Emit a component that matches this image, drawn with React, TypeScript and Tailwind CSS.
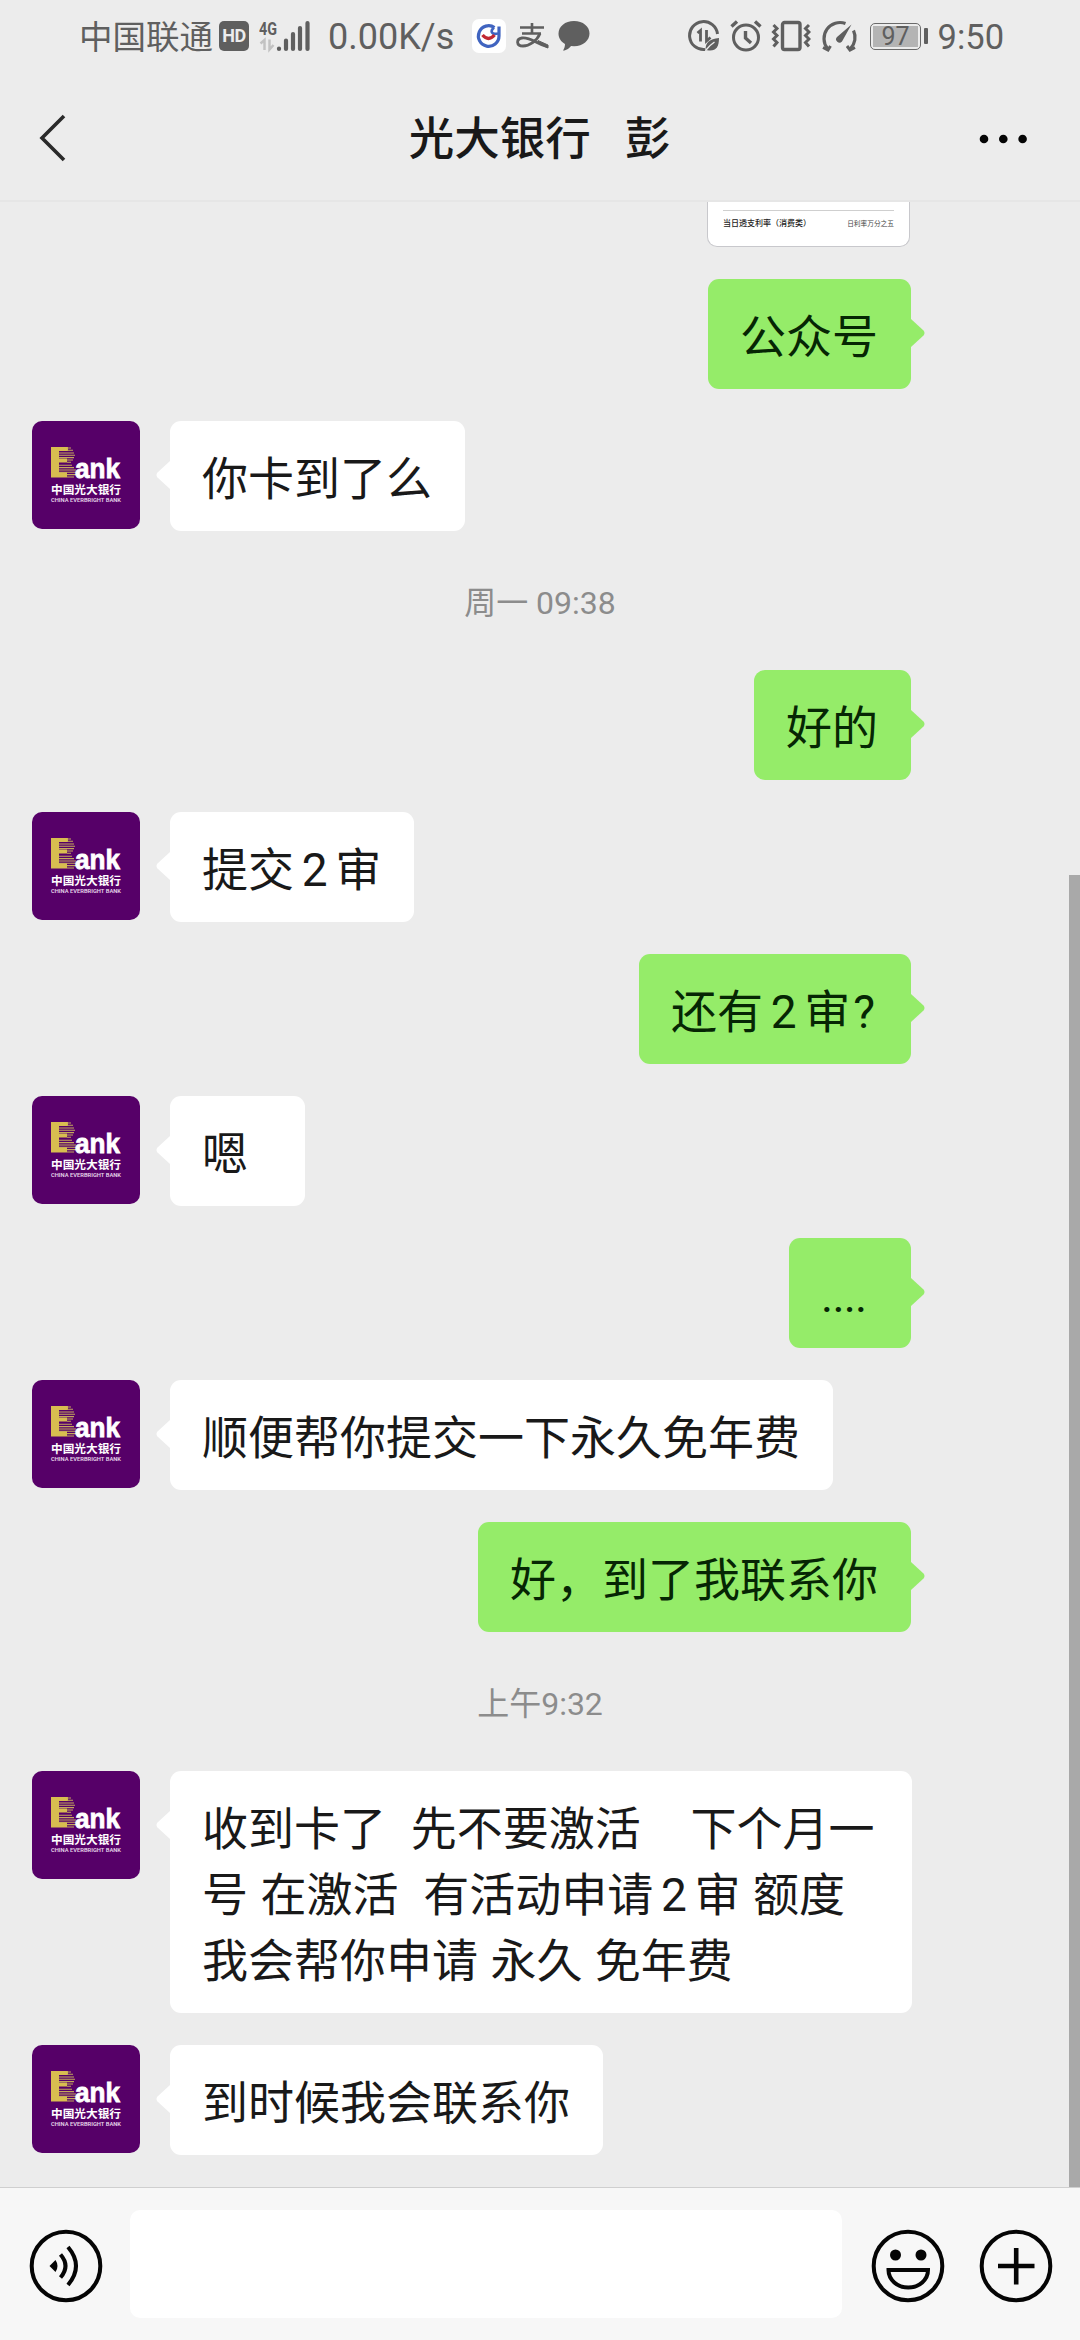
import clsx from 'clsx'

type Item =
  | { kind: 'time'; text: string }
  | { kind: 'msg'; mine: boolean; lines: string[] }

const items: Item[] = [
  { kind: 'msg', mine: true, lines: ['公众号'] },
  { kind: 'msg', mine: false, lines: ['你卡到了么'] },
  { kind: 'time', text: '周一 09:38' },
  { kind: 'msg', mine: true, lines: ['好的'] },
  { kind: 'msg', mine: false, lines: ['提交2审'] },
  { kind: 'msg', mine: true, lines: ['还有2审?'] },
  { kind: 'msg', mine: false, lines: ['嗯  '] },
  { kind: 'msg', mine: true, lines: ['.... '] },
  { kind: 'msg', mine: false, lines: ['顺便帮你提交一下永久免年费'] },
  { kind: 'msg', mine: true, lines: ['好，到了我联系你'] },
  { kind: 'time', text: '上午9:32' },
  {
    kind: 'msg',
    mine: false,
    lines: ['收到卡了  先不要激活    下个月一', '号 在激活  有活动申请2审 额度', '我会帮你申请 永久 免年费'],
  },
  { kind: 'msg', mine: false, lines: ['到时候我会联系你'] },
]

function StatusBar() {
  return (
    <div className="flex h-[72px] shrink-0 items-center text-[#5f5f5f]">
      <span className="ml-[79px] w-[134px] whitespace-nowrap pt-[3px] text-[33.5px] leading-none">中国联通</span>
      <span className="ml-[6px] flex h-[30px] w-[30px] items-center justify-center rounded-[5px] bg-[#5f5f5f] text-[18px] font-bold leading-none tracking-[-0.5px] text-[#ececec]">
        HD
      </span>
      {/* Signal */}
      <svg className="ml-[10px]" width="52" height="44" viewBox="0 -6 52 44">
        <text x="0" y="14.500" fontSize="18" fontWeight="700" fill="#5f5f5f" textLength="18" lengthAdjust="spacingAndGlyphs">4G</text>
        <g stroke="#c2c2c2" strokeWidth="2.5" fill="none">
          <path d="M1.500 23.500l4-3.500v10M10.500 19.500v10l4-4.500" />
        </g>
        <g stroke="#5f5f5f" strokeWidth="4.200" strokeLinecap="round">
          <path d="M20 28.500v.5M27 20.500v8.500M34 14v15M41 8v21M48.500 3v26" />
        </g>
      </svg>
      <span className="ml-[17px] w-[126px] whitespace-nowrap pt-[2px] text-[36px] leading-none">0.00K/s</span>
      {/* Notification icons */}
      <svg className="ml-[18px]" width="34" height="34" viewBox="0 0 34 34" fill="none">
        <rect width="34" height="34" rx="7" fill="#fff" />
        <path d="M22.500 8.500A10.300 10.300 0 1 0 27 17V7.500" stroke="#4064c0" strokeWidth="3.200" />
        <path d="M22 8.500C18 12 19 16 26 14.500" stroke="#4064c0" strokeWidth="2.600" />
        <path d="M10.500 16q6 7 12 0" stroke="#c22832" strokeWidth="3.400" />
      </svg>
      <svg className="ml-[10px]" width="33" height="30" viewBox="0 0 33 30" fill="none" stroke="#5f5f5f">
        <path d="M4 6.500h24M16 2v10M6 12.500h19" strokeWidth="2.600" />
        <path d="M24 12.500C21 20 13 25 7 25c-7 0-7-7-1-8 9-1 14 6 26 9" strokeWidth="2.800" />
        <path d="M22 19.500l10 4.500v3l-10-5z" fill="#5f5f5f" strokeWidth="1" />
      </svg>
      <svg className="ml-[8px]" width="34" height="32" viewBox="0 0 34 32" fill="#5f5f5f">
        <path d="M17 1C8 1 1.500 6.500 1.500 13.500c0 4.500 2.500 8.300 6.500 10.500 0 3-1 5-2 6.500 4 0 6.500-2.500 8-4.500l3 .2c9 0 15.500-5.700 15.500-12.700S26 1 17 1z" />
      </svg>

      {/* Data saver */}
      <svg className="ml-[97px]" width="32" height="32" viewBox="0 0 32 32" fill="none" stroke="#5f5f5f">
        <path d="M17 29.500A14 14 0 1 1 29.500 14" strokeWidth="3" />
        <path d="M9.500 13l3-2.500v11M18.500 10v11l4-3.500" strokeWidth="2.800" />
        <path d="M17.500 30c0-8 4-11 13.500-12 0 9-3 13-10 12.500z" fill="#5f5f5f" stroke="none" />
        <path d="M18 30q4-5 8.500-8" stroke="#ececec" strokeWidth="1.400" />
      </svg>
      {/* Alarm */}
      <svg className="ml-[10px]" width="32" height="32" viewBox="0 0 32 32" fill="none" stroke="#5f5f5f" strokeWidth="3">
        <circle cx="16" cy="17.500" r="12.500" />
        <path d="M15.500 11v7l5.500 5M1.500 6.500l5.500-5M30.500 6.500l-5.500-5" strokeWidth="3.400" />
      </svg>
      {/* Vibrate */}
      <svg className="ml-[9px]" width="40" height="32" viewBox="0 0 40 32" fill="none" stroke="#5f5f5f" strokeWidth="3.400">
        <rect x="11.500" y="2.500" width="17.500" height="27" rx="2" />
        <path d="M2.500 5l3.500 3.500-3.500 3.500 3.500 3.500-3.500 3.500 3.500 3.500-3.500 4M38 5l-3.500 3.500 3.500 3.500-3.500 3.500 3.500 3.500-3.500 3.500 3.500 4" strokeWidth="3" />
      </svg>
      {/* Performance gauge */}
      <svg className="ml-[9px]" width="38" height="34" viewBox="0 0 38 34" fill="none" stroke="#5f5f5f" strokeWidth="3.200">
        <path d="M25.500 4.500A16 16 0 0 0 7.500 29.500M33.500 11.500A16 16 0 0 1 30.500 29.500" />
        <path d="M3 28.500l5 2.500 2.500-4M35 28.500l-5 2.500-3-4" strokeWidth="3" />
        <path d="M31.500 5.500L22 22.500a3.300 3.300 0 1 1-5-4.500z" fill="#5f5f5f" stroke="none" />
      </svg>
      {/* Battery */}
      <div className="ml-[12px] flex items-center">
        <div className="flex h-[27px] w-[51px] rounded-[5px] border-[1.500px] border-[#6a6a6a] p-[2px]">
          <span className="flex flex-1 items-center justify-center bg-[#b4b4b4] text-[25px] leading-none">97</span>
        </div>
        <span className="ml-[3px] h-[16px] w-[3.500px] rounded-[1px] bg-[#5f5f5f]" />
      </div>
      <span className="ml-[10px] pt-[2px] text-[34.500px] leading-none">9:50</span>
    </div>
  )
}

function Header() {
  return (
    <div className="grid h-[130px] shrink-0 grid-cols-[1fr_auto_1fr] items-center border-b-2 border-[#e6e6e6] pl-[38px] pr-[53px]">
      <svg className="mt-[3px]" width="30" height="50" viewBox="0 0 30 50" fill="none" stroke="#2a2a2a" strokeWidth="3.600">
        <path d="M26 3L4 25l22 22" />
      </svg>
      <h1 className="ml-[14px] whitespace-pre pt-[7px] text-[45.500px] font-medium leading-none text-[#191919]">光大银行   彭</h1>
      <svg className="mt-[5px] justify-self-end" width="48" height="10" viewBox="0 0 48 10" fill="#050505">
        <circle cx="5" cy="5" r="4.300" />
        <circle cx="24.300" cy="5" r="4.300" />
        <circle cx="43.600" cy="5" r="4.300" />
      </svg>
    </div>
  )
}

function Avatar() {
  return (
    <svg className="h-[108px] w-[108px] shrink-0 rounded-[10px]" viewBox="0 0 108 108">
      <rect width="108" height="108" fill="#560068" />
      <path d="M19 26h17v4h-9v7.500h8v4h-8V51h8v5.500H19z" fill="#d8bd50" />
      <g stroke="#c4a85c" strokeWidth="1.100">
        <path d="M35 27h4M35 29.300h6M27 32h15M27 34.300h16M27 36.600h15M35 39h6M35 41.300h4M27 44.300h13M27 46.600h15M27 49h17M27 51.300h17M35 53.600h9M35 56h7" />
      </g>
      <text x="43" y="56.500" fontFamily="Liberation Sans" fontSize="27" fontWeight="700" fill="#fff" stroke="#fff" strokeWidth=".8" textLength="45" lengthAdjust="spacingAndGlyphs">ank</text>
      <text x="19" y="72.500" fontFamily="Noto Sans CJK SC" fontSize="11.700" fontWeight="700" fill="#fff" textLength="70">中国光大银行</text>
      <text x="19" y="80.500" fontSize="5.500" fontWeight="600" fill="#e6d6ea" textLength="70" lengthAdjust="spacingAndGlyphs">CHINA EVERBRIGHT BANK</text>
    </svg>
  )
}

/* Digits and question marks next to Chinese characters get a little air */
function Line({ text }: { text: string }) {
  return (
    <p className="whitespace-pre">
      {text.split(/([2?])/).map((part, i) => (
        <span
          key={i}
          className={clsx(part === '2' && 'mx-[7.700px]', part === '?' && 'mx-[3px]', part.startsWith('.') && 'tracking-[-0.800px]')}
        >
          {part}
        </span>
      ))}
    </p>
  )
}

function Bubble({ mine, lines }: { mine: boolean; lines: string[] }) {
  return (
    <div
      className={clsx(
        'relative rounded-[11px] px-[32.500px] pb-[19px] pt-[25px] text-[46px] leading-[66px] [word-spacing:1px]',
        mine ? 'bg-[#95ec69] text-[#062604]' : 'bg-white text-[#191919]',
        lines.length > 1 && 'w-[742px]'
      )}
    >
      <svg
        className={clsx('absolute top-[39px] h-[30px] w-[14px]', mine ? '-right-[14px]' : '-left-[14px] -scale-x-100')}
        viewBox="0 0 14 30"
        fill={mine ? '#95ec69' : '#fff'}
      >
        <path d="M0 1l12.500 11.500q2 2.500 0 5L0 29z" />
      </svg>
      {lines.map((line) => (
        <Line key={line} text={line} />
      ))}
    </div>
  )
}

/* Bottom edge of a picture message that is scrolled under the header */
function PictureMessage() {
  return (
    <div className="mr-[170px] h-[45px] w-[203px] self-end rounded-b-[10px] border border-t-0 border-[#c8c8cc] bg-white px-[15px] pt-[8px]">
      <div className="flex items-center justify-between border-t border-[#cfcfcf] pt-[9px] leading-none">
        <span className="whitespace-nowrap text-[8px] font-medium text-[#222]">当日透支利率（消费类）</span>
        <span className="whitespace-nowrap text-[6.700px] text-[#444]">日利率万分之五</span>
      </div>
    </div>
  )
}

export default function App() {
  return (
    <div className="flex h-[2340px] w-[1080px] flex-col overflow-hidden bg-[#ececec] font-[Roboto,'Noto_Sans_CJK_SC',sans-serif]">
      <StatusBar />
      <Header />

      <div className="relative flex flex-1 flex-col gap-8">
        <PictureMessage />
        {items.map((item, i) =>
          item.kind === 'time' ? (
            <div key={i} className="flex h-[75px] items-center justify-center pt-[5px] text-[32px] leading-none text-[#8c8c8c]">
              {item.text}
            </div>
          ) : (
            <div key={i} className={clsx('flex items-start', item.mine ? 'justify-end pr-[169.500px]' : 'gap-[29.500px] pl-[32px]')}>
              {!item.mine && <Avatar />}
              <Bubble mine={item.mine} lines={item.lines} />
            </div>
          )
        )}
        {/* Scrollbar */}
        <div className="absolute bottom-0 right-0 top-[673px] w-[11px] bg-[#a9a9a9]" />
      </div>

      <div className="flex h-[153px] shrink-0 items-center border-t border-[#cfcfcf] bg-[#f7f7f7] pl-[29px] pr-[27px]">
        <svg className="mt-[3px]" width="74" height="74" viewBox="0 0 74 74" fill="none" stroke="#050505" strokeWidth="4">
          <circle cx="37" cy="37" r="34.300" />
          <path d="M20.500 37l6-6q4 6 0 12z" fill="#050505" stroke="none" />
          <path d="M31.500 25.500q10 11.500 0 23M39 18q16 19 0 38" />
        </svg>
        <div className="ml-[27px] h-[108px] w-[712px] rounded-[10px] bg-white" />
        <svg className="ml-auto mt-[3px]" width="74" height="74" viewBox="0 0 74 74" fill="none" stroke="#050505" strokeWidth="4">
          <circle cx="37" cy="37" r="34.300" />
          <circle cx="24.500" cy="26" r="5.500" fill="#050505" stroke="none" />
          <circle cx="50" cy="26" r="5.500" fill="#050505" stroke="none" />
          <path d="M17.500 41h39.500a19.700 17.500 0 0 1-39.500 0z" />
        </svg>
        <svg className="ml-[34px] mt-[3px]" width="74" height="74" viewBox="0 0 74 74" fill="none" stroke="#050505" strokeWidth="4">
          <circle cx="37" cy="37" r="34.300" />
          <path d="M19 37h36.500M37.200 19v36.500" strokeWidth="4.600" />
        </svg>
      </div>
    </div>
  )
}
